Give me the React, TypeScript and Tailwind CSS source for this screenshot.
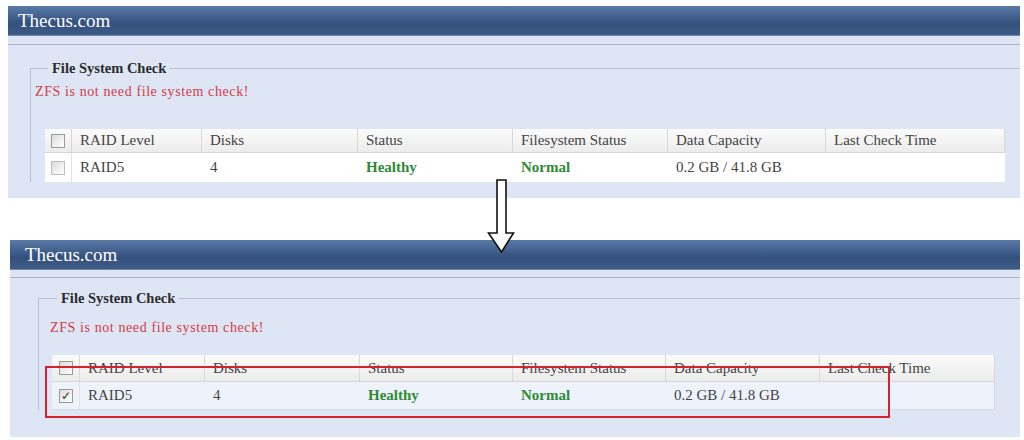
const cols = ["RAID Level", "Disks", "Status", "Filesystem Status", "Data Capacity", "Last Check Time"];

function Box({ checked = false, faded = false }: { checked?: boolean; faded?: boolean }) {
  return (
    <span
      className={
        "flex items-center justify-center w-[14px] h-[14px] border bg-gradient-to-br from-[#dcdcdc] to-white text-[12px] leading-none text-[#333] " +
        (faded ? "border-[#bdbdbd]" : "border-[#9a9a9a]")
      }
    >
      {checked ? "✓" : ""}
    </span>
  );
}

function Panel(props: any) {
  const { grid, selected } = props;
  return (
    <div className={props.wrap}>
      <div className="h-[30px] flex items-center bg-gradient-to-b from-[#5a7aa8] via-[#34517e] via-60% to-[#3f5c87] border-b border-[#6f88ad]">
        <span className={"text-white text-[19px] leading-none " + props.titlePad}>Thecus.com</span>
      </div>
      <div className={"bg-[#dee6f5] overflow-hidden " + props.bodyH}>
        <div className={"border-b border-[#aab4c5] " + props.stripH} />
        <fieldset className={"border-t border-l border-[#b4bfd0] " + props.fsPos}>
          <legend className={"px-[4px] text-[14.5px] font-bold leading-[16px] text-[#2c2c2c] " + props.legendPad}>File System Check</legend>
          <p className={"text-[14px] leading-[16px] text-[#d33b45] tracking-[0.6px] " + props.redPos}>ZFS is not need file system check!</p>
          <div className={"text-[15px] text-[#444] " + props.tablePos}>
            <div className={"grid bg-gradient-to-b from-[#fbfbfb] to-[#ececec] border-b border-[#d6d6d6] " + grid + " " + props.headH}>
              <div className="flex items-center justify-center border-r border-[#d8d8d8]">
                <Box />
              </div>
              {cols.map((c) => (
                <div key={c} className="flex items-center pl-[8px] border-r border-[#d8d8d8]">
                  {c}
                </div>
              ))}
            </div>
            <div className={"grid " + grid + " " + props.rowH + " " + (selected ? "bg-[#edf2fb] border-b border-[#d4d9e2]" : "bg-white")}>
              <div className="flex items-center justify-center border-r border-[#e2e2e2]">
                <Box checked={selected} faded={!selected} />
              </div>
              <div className="flex items-center pl-[8px]">RAID5</div>
              <div className="flex items-center pl-[8px]">4</div>
              <div className="flex items-center pl-[8px] font-bold text-[#2f8a35]">Healthy</div>
              <div className="flex items-center pl-[8px] font-bold text-[#2f8a35]">Normal</div>
              <div className="flex items-center pl-[8px]">0.2 GB / 41.8 GB</div>
              <div className={"flex items-center pl-[8px] " + (selected ? "border-r border-[#d4d9e2]" : "")} />
            </div>
          </div>
        </fieldset>
      </div>
    </div>
  );
}

export default function App() {
  return (
    <div className="relative w-[1024px] h-[440px] bg-white overflow-hidden font-['Liberation_Serif',serif]">
      <Panel
        wrap="ml-[8px] mt-[6px] w-[1012px]"
        titlePad="pl-[10px]"
        bodyH="h-[162px]"
        stripH="h-[9px]"
        fsPos="ml-[22px] mt-[15px]"
        legendPad="ml-[17px]"
        redPos="mt-[8px] pl-[4px]"
        tablePos="mt-[29px] ml-[14px] w-[960px]"
        grid="grid-cols-[27px_130px_156px_155px_155px_158px_179px]"
        headH="h-[24px]"
        rowH="h-[29px]"
        selected={false}
      />
      <Panel
        wrap="ml-[10px] mt-[42px] w-[1010px]"
        titlePad="pl-[15px]"
        bodyH="h-[167px]"
        stripH="h-[8px]"
        fsPos="ml-[28px] mt-[12px]"
        legendPad="ml-[18px]"
        redPos="mt-[14px] pl-[11px]"
        tablePos="mt-[19px] ml-[13px] w-[943px]"
        grid="grid-cols-[28px_125px_155px_153px_153px_154px_175px]"
        headH="h-[27px]"
        rowH="h-[28px]"
        selected={true}
      />

      {/* highlight around the selected volume */}
      <div className="absolute left-[45px] top-[366px] w-[845px] h-[52px] border-2 border-[#d3232d]" />

      {/* down arrow between the two states */}
      <svg className="absolute left-[487px] top-[179px]" width="28" height="76" viewBox="0 0 28 76">
        <path
          d="M10 1 H19 V54 H26.5 L14.5 73 L1.5 54 H10 Z"
          fill="white"
          stroke="#111"
          strokeWidth="1.6"
          strokeLinejoin="miter"
        />
      </svg>
    </div>
  );
}
